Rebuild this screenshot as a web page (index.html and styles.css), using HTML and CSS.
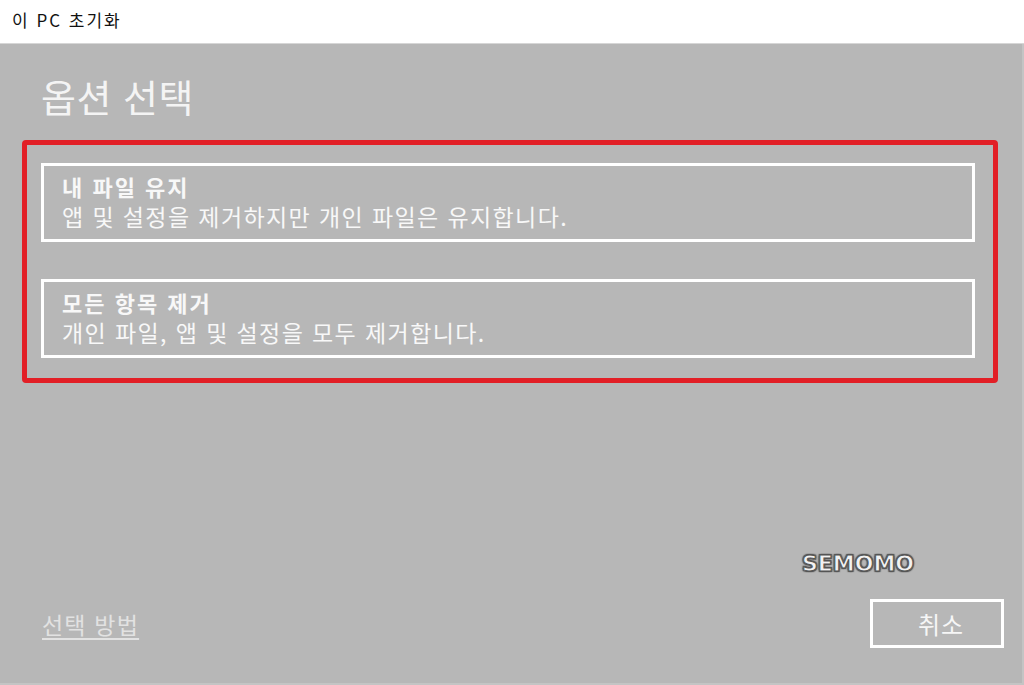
FILE: index.html
```html
<!DOCTYPE html>
<html lang="ko">
<head>
    <meta charset="UTF-8">
    <meta name="viewport" content="width=device-width, initial-scale=1.0">
    <title>이 PC 초기화</title>
    <link rel="stylesheet" href="styles.css">
</head>
<body>
    <div class="window">
        <div class="titlebar">이 PC 초기화</div>

        <div class="panel">
            <h1>옵션 선택</h1>

            <div class="highlight">
                <div class="option">
                    <div class="option-title">내 파일 유지</div>
                    <div class="option-desc">앱 및 설정을 제거하지만 개인 파일은 유지합니다.</div>
                </div>
                <div class="option">
                    <div class="option-title">모든 항목 제거</div>
                    <div class="option-desc">개인 파일, 앱 및 설정을 모두 제거합니다.</div>
                </div>
            </div>

            <div class="footer">
                <a href="#" class="help-link">선택 방법</a>
                <button class="cancel">취소</button>
            </div>

            <!-- 워터마크 -->
            <div class="watermark">SEMOMO</div>
        </div>
    </div>
</body>
</html>
```

FILE: styles.css
```css
body {
    margin: 0;
    font-family: "Noto Sans CJK KR", "Noto Sans", sans-serif;
    background-color: #ffffff;
}
.window {
    width: 1024px;
    height: 685px;
    display: flex;
    flex-direction: column;
    overflow: hidden;
}
.titlebar {
    height: 43px;
    padding-left: 12px;
    font-size: 17px;
    letter-spacing: 2px;
    line-height: 40px;
    color: #111;
    border-bottom: 1px solid #d6d6d6;
}
.panel {
    position: relative;
    flex: 1;
    background-color: #b7b7b7;
    display: flex;
    flex-direction: column;
    border-right: 2px solid #c4c4c4;
    border-bottom: 2px solid #c4c4c4;
}
h1 {
    margin: 28px 0 0 41px;
    font-size: 38px;
    font-weight: normal;
    letter-spacing: 0.5px;
    line-height: 48px;
    color: #f4f4f4;
}
.highlight {
    margin: 20px 0 0 22px;
    width: 976px;
    box-sizing: border-box;
    border: 5px solid #e21f26;
    border-radius: 4px;
    padding: 18px 18px 20px 14px;
    display: flex;
    flex-direction: column;
    gap: 37px;
}
.option {
    height: 79px;
    box-sizing: border-box;
    border: 3px solid #ffffff;
    padding: 6px 0 0 18px;
    color: #f8f8f8;
}
.option-title {
    font-size: 22px;
    font-weight: bold;
    letter-spacing: 2px;
    line-height: 29px;
}
.option-desc {
    font-size: 23px;
    letter-spacing: 1.4px;
    line-height: 31px;
}
.footer {
    margin-top: auto;
    margin-bottom: 35px;
    padding: 0 18px 0 42px;
    display: flex;
    justify-content: space-between;
    align-items: center;
}
.help-link {
    font-size: 23px;
    letter-spacing: 1.2px;
    color: #e2e2e2;
    text-decoration: underline;
    text-underline-offset: 4px;
}
.cancel {
    width: 134px;
    height: 49px;
    padding: 0 0 0 8px;
    background-color: transparent;
    border: 3px solid #ffffff;
    font-family: inherit;
    font-size: 24px;
    letter-spacing: 1px;
    color: #f6f6f6;
    cursor: pointer;
}
.watermark {
    position: absolute;
    left: 802px;
    top: 507px;
    font-family: "DejaVu Sans", sans-serif;
    font-size: 22px;
    font-weight: bold;
    color: #f2f2f2;
    -webkit-text-stroke: 1px #555;
    text-shadow: 0 0 2px #555, 1px 1px 1px #555, -1px -1px 1px #555, 1px -1px 1px #555, -1px 1px 1px #555;
}
```
